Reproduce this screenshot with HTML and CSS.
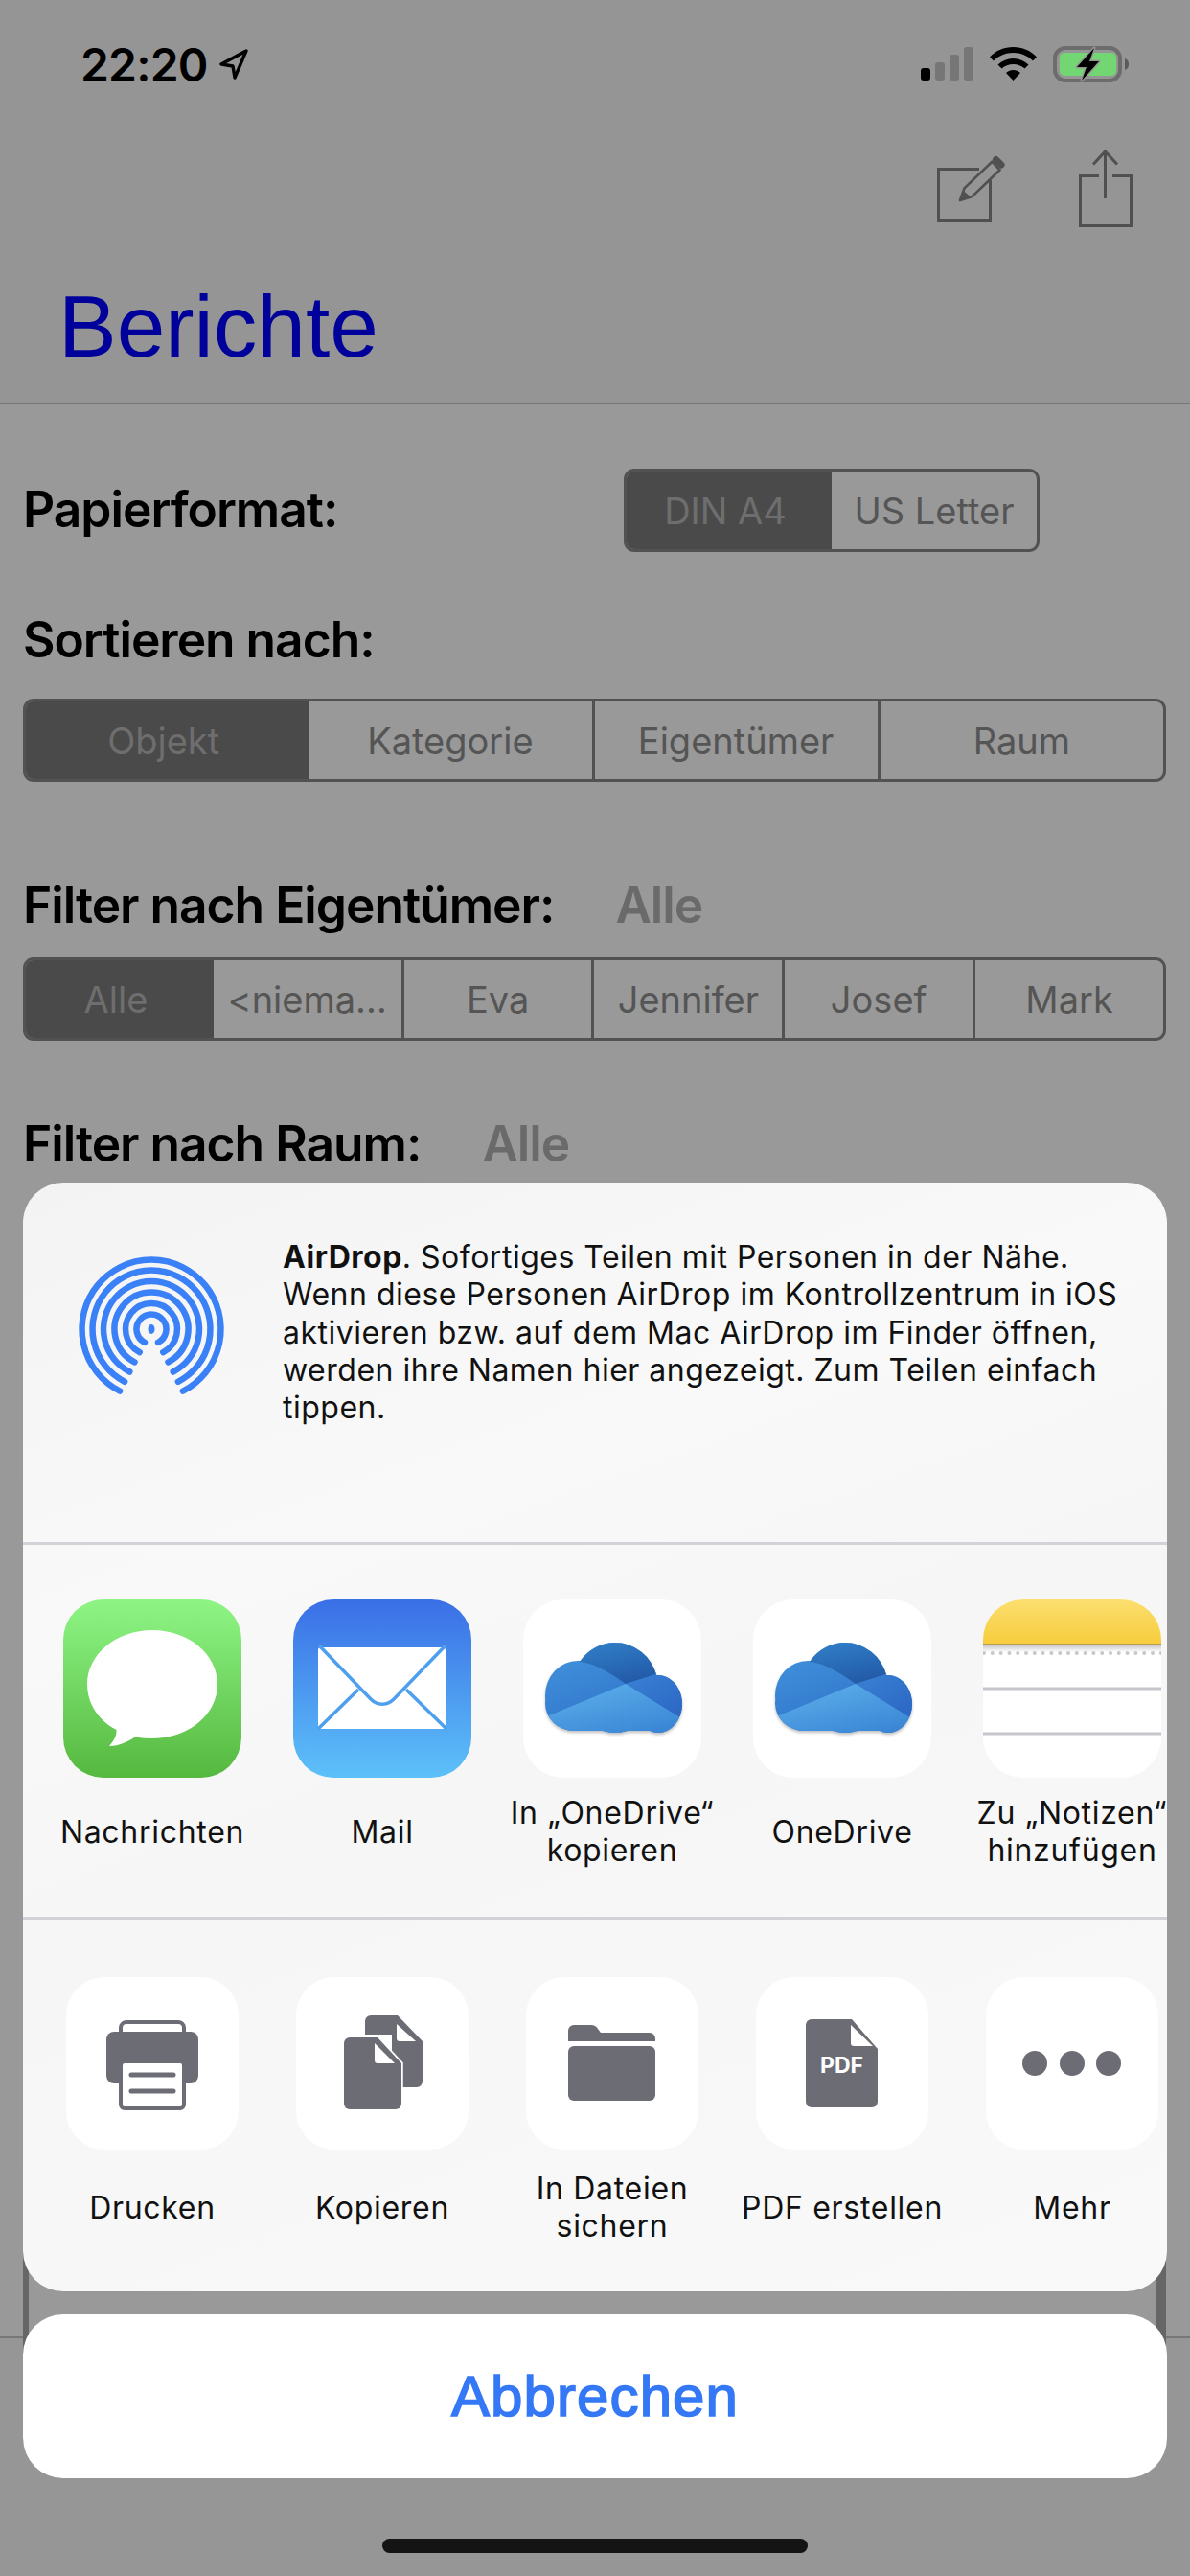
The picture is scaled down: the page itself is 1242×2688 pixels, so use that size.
FILE: index.html
```html
<!DOCTYPE html>
<html lang="de">
<head>
    <meta charset="UTF-8">
    <meta name="viewport" content="width=device-width, initial-scale=1.0">
    <title>Berichte</title>
    <link rel="stylesheet" href="styles.css">
</head>
<body>
    <svg class="defs" width="0" height="0">
        <defs>
            <linearGradient id="od-dark" x1="0.3" y1="0" x2="0.7" y2="1"><stop offset="0" stop-color="#3180c9"/><stop offset="1" stop-color="#2258a6"/></linearGradient>
            <linearGradient id="od-left" x1="0.2" y1="0" x2="0.8" y2="1"><stop offset="0" stop-color="#4295df"/><stop offset="1" stop-color="#2c69c2"/></linearGradient>
            <linearGradient id="od-right" x1="0.2" y1="0" x2="0.8" y2="1"><stop offset="0" stop-color="#3a85d6"/><stop offset="1" stop-color="#2c66c4"/></linearGradient>
            <linearGradient id="od-low" x1="0.2" y1="0" x2="0.8" y2="1"><stop offset="0" stop-color="#5cafea"/><stop offset="1" stop-color="#3782d4"/></linearGradient>
            <clipPath id="od-shape">
                <ellipse cx="57" cy="100" rx="34" ry="36"/>
                <ellipse cx="96" cy="92" rx="45" ry="47"/>
                <ellipse cx="141" cy="109" rx="25" ry="30"/>
                <rect x="23" y="80" width="143" height="57" rx="30"/>
            </clipPath>
            <symbol id="onedrive" viewBox="0 0 186 186">
                <g class="cloud-shape">
                    <g clip-path="url(#od-shape)">
                        <rect x="15" y="40" width="160" height="105" fill="url(#od-left)"/>
                        <path d="M59 40H145V78H139L107 88C95 80 78 67 59 65Z" fill="url(#od-dark)"/>
                        <path d="M139 78L107 88L170 127V60H139Z" fill="url(#od-right)"/>
                        <path d="M20 124L107 88L170 127V145H20Z" fill="url(#od-low)"/>
                    </g>
                </g>
            </symbol>
        </defs>
    </svg>

    <div class="screen">
        <header class="app-header">
            <div class="status-bar">
                <div class="status-left">
                    <span class="time">22:20</span>
                    <svg class="loc" width="32" height="34" viewBox="0 0 32 34"><path d="M29 3L3 17L15 19L17 31Z" fill="none" stroke="#000" stroke-width="3.4" stroke-linejoin="round"/></svg>
                </div>
                <div class="status-right">
                    <svg width="55" height="36" viewBox="0 0 55 36">
                        <rect x="0" y="22" width="10" height="13" rx="3" fill="#000"/>
                        <rect x="15" y="16" width="10" height="19" rx="3" fill="#767676"/>
                        <rect x="30" y="8" width="10" height="27" rx="3" fill="#767676"/>
                        <rect x="45" y="0" width="10" height="35" rx="3" fill="#767676"/>
                    </svg>
                    <svg width="49" height="36" viewBox="0 0 49 36">
                        <path d="M24.5 0C15 0 6.5 3.5 0 10.5L4 14.5C9.5 9 16.5 6 24.5 6S39.500 9 45 14.500L49 10.500C42.500 3.500 34 0 24.500 0Z" fill="#000"/>
                        <path d="M24.500 12C18.500 12 13 14.200 8.500 18.500L12.500 22.500C15.800 19.500 20 18 24.500 18S33.200 19.500 36.500 22.500L40.500 18.500C36 14.200 30.500 12 24.500 12Z" fill="#000"/>
                        <path d="M24.500 24C21.800 24 19.200 25 17 27L24.500 35L32 27C29.800 25 27.200 24 24.500 24Z" fill="#000"/>
                    </svg>
                    <svg width="80" height="38" viewBox="0 0 80 38">
                        <rect x="2" y="2" width="68" height="34" rx="11" fill="none" stroke="#6c6c6c" stroke-width="4"/>
                        <rect x="7" y="7" width="59" height="24" rx="5" fill="#72d672"/>
                        <path d="M75 13C78 14 79 16 79 19S78 24 75 25Z" fill="#5a5a5a"/>
                        <path d="M43 2L25 22H35L30 36L48 16H38Z" fill="#000" stroke="#959595" stroke-width="3" stroke-linejoin="round" paint-order="stroke"/>
                    </svg>
                </div>
            </div>
            <div class="toolbar">
                <svg width="80" height="90" viewBox="0 0 80 90" fill="none" stroke="#505050">
                    <path d="M50 24.500H7.500V78.500H61.500V36" stroke-width="3"/>
                    <path d="M30 57L34.500 44.400L63.400 16.700L71.600 25.300L42.700 53Z" stroke-width="2.600" stroke-linejoin="round"/>
                    <path d="M30 57L33 47L40 53Z" fill="#505050" stroke-width="1"/>
                    <path d="M67.500 14.500L73 20" stroke-width="7" stroke-linecap="round"/>
                </svg>
                <svg width="70" height="90" viewBox="0 0 70 90" fill="none" stroke="#505050" stroke-width="3">
                    <path d="M27 31.500H7.500V83.500H60.500V31.500H41"/>
                    <path d="M33.500 6V55"/>
                    <path d="M21 19.500L33.500 6L46 19.500"/>
                </svg>
            </div>
            <h1 class="title">Berichte</h1>
        </header>

        <main class="form">
            <div class="paper-row">
                <h2 class="form-label paper-label">Papierformat:</h2>
                <div class="segments paper-segments">
                    <span class="segment active">DIN A4</span>
                    <span class="segment">US Letter</span>
                </div>
            </div>

            <h2 class="form-label sort-label">Sortieren nach:</h2>
            <div class="segments">
                <span class="segment active">Objekt</span>
                <span class="segment">Kategorie</span>
                <span class="segment">Eigentümer</span>
                <span class="segment">Raum</span>
            </div>

            <h2 class="form-label owner-label">Filter nach Eigentümer:<span class="filter-value">Alle</span></h2>
            <div class="segments">
                <span class="segment active">Alle</span>
                <span class="segment">&lt;niema…</span>
                <span class="segment">Eva</span>
                <span class="segment">Jennifer</span>
                <span class="segment">Josef</span>
                <span class="segment">Mark</span>
            </div>

            <h2 class="form-label room-label">Filter nach Raum:<span class="filter-value">Alle</span></h2>
        </main>

        <footer class="tabbar">
            <div class="home-bar"></div>
        </footer>

        <div class="preview"></div>

        <div class="share">
            <div class="sheet">
                <section class="airdrop">
                    <svg class="airdrop-icon" width="160" height="160" viewBox="0 0 160 160" fill="none" stroke="#3a80f6" stroke-width="6.500" stroke-linecap="round">
                        <path d="M47.100 144.600A72.500 72.500 0 1 1 112.900 144.600"/>
                        <path d="M52.100 134.800A61.500 61.500 0 1 1 107.900 134.800"/>
                        <path d="M57.300 124.500A50 50 0 1 1 102.700 124.500"/>
                        <path d="M62.500 114.300A38.500 38.500 0 1 1 97.500 114.300"/>
                        <path d="M67.700 104.100A27 27 0 1 1 92.300 104.100"/>
                        <path d="M73 93.800A15.500 15.500 0 1 1 87 93.800"/>
                        <ellipse cx="80" cy="80" rx="3.500" ry="5" fill="#3a80f6" stroke="none"/>
                    </svg>
                    <p class="airdrop-text"><strong>AirDrop</strong>. Sofortiges Teilen mit Personen in der Nähe. Wenn diese Personen AirDrop im Kontrollzentrum in iOS aktivieren bzw. auf dem Mac AirDrop im Finder öffnen, werden ihre Namen hier angezeigt. Zum Teilen einfach tippen.</p>
                </section>

                <section class="share-row apps">
                    <div class="share-item">
                        <svg class="share-icon messages" viewBox="0 0 186 186">
                            <path d="M93 32C130.500 32 161 57 161 88.500S130.500 145 93 145C87 145 81 144.500 75 143.500C68 148 58 153 48 153C52 148 56 143 55.500 136C36 126 25 108 25 88.500C25 57 55.500 32 93 32Z" fill="#fff"/>
                        </svg>
                        <span class="share-name">Nachrichten</span>
                    </div>
                    <div class="share-item">
                        <svg class="share-icon mail" viewBox="0 0 186 186">
                            <rect x="26" y="50" width="133" height="85" rx="3" fill="#fff"/>
                            <g fill="none" stroke="#4f9fef" stroke-width="3.500">
                                <path d="M27 48L81 104C88 111 98 111 105 104L159 48"/>
                                <path d="M26 135L68 94M160 135L118 94"/>
                            </g>
                        </svg>
                        <span class="share-name">Mail</span>
                    </div>
                    <div class="share-item">
                        <svg class="share-icon plain"><use href="#onedrive"/></svg>
                        <span class="share-name">In „OneDrive“<br>kopieren</span>
                    </div>
                    <div class="share-item">
                        <svg class="share-icon plain"><use href="#onedrive"/></svg>
                        <span class="share-name">OneDrive</span>
                    </div>
                    <div class="share-item">
                        <svg class="share-icon plain notes" viewBox="0 0 186 186">
                            <defs>
                                <linearGradient id="notes-top" x1="0" y1="0" x2="0" y2="1"><stop offset="0" stop-color="#fbdf70"/><stop offset="1" stop-color="#f7cc3c"/></linearGradient>
                                <linearGradient id="notes-shade" x1="0" y1="0" x2="0" y2="1"><stop offset="0" stop-color="#c4c4c4"/><stop offset="1" stop-color="#fff"/></linearGradient>
                            </defs>
                            <rect x="0" y="0" width="186" height="47" fill="url(#notes-top)"/>
                            <rect x="0" y="47" width="186" height="8" fill="url(#notes-shade)"/>
                            <rect x="0" y="46" width="186" height="2" fill="#b89d50"/>
                            <path d="M1 56H186" stroke="#c8c8cc" stroke-width="4" stroke-linecap="round" stroke-dasharray="0 8.800"/>
                            <path d="M0 93H186M0 140H186" stroke="#c6c6cc" stroke-width="3"/>
                        </svg>
                        <span class="share-name">Zu „Notizen“<br>hinzufügen</span>
                    </div>
                </section>

                <section class="share-row actions">
                    <div class="share-item">
                        <svg class="share-icon action" viewBox="0 0 180 180">
                            <rect x="57" y="47" width="66" height="30" rx="6" fill="none" stroke="#6c6c74" stroke-width="4"/>
                            <rect x="42" y="57" width="96" height="54" rx="8" fill="#6c6c74"/>
                            <rect x="57" y="88" width="66" height="49" rx="4" fill="#fff" stroke="#6c6c74" stroke-width="4"/>
                            <path d="M68 102H112M68 119H112" stroke="#6c6c74" stroke-width="5" stroke-linecap="round"/>
                        </svg>
                        <span class="share-name">Drucken</span>
                    </div>
                    <div class="share-item">
                        <svg class="share-icon action" viewBox="0 0 180 180">
                            <path d="M78 40H106L132 67V109A6 6 0 0 1 126 115H100V60H72V46A6 6 0 0 1 78 40Z" fill="#6c6c74"/>
                            <path d="M105 49V64A3 3 0 0 0 108 67H125Z" fill="#fff"/>
                            <path d="M56 63H85L110 90V132A6 6 0 0 1 104 138H56A6 6 0 0 1 50 132V69A6 6 0 0 1 56 63Z" fill="#6c6c74" stroke="#fff" stroke-width="3.500" paint-order="stroke"/>
                            <path d="M82 69V87A3 3 0 0 0 85 90H103Z" fill="#fff"/>
                        </svg>
                        <span class="share-name">Kopieren</span>
                    </div>
                    <div class="share-item">
                        <svg class="share-icon action" viewBox="0 0 180 180">
                            <path d="M44 67V56A6 6 0 0 1 50 50H68C71 50 73 51 75 54L78 58H129A6 6 0 0 1 135 64V67Z" fill="#6c6c74"/>
                            <rect x="44" y="72" width="91" height="57" rx="6" fill="#6c6c74"/>
                        </svg>
                        <span class="share-name">In Dateien<br>sichern</span>
                    </div>
                    <div class="share-item">
                        <svg class="share-icon action" viewBox="0 0 180 180">
                            <path d="M58 44H100L127 75V130A6 6 0 0 1 121 136H58A6 6 0 0 1 52 130V50A6 6 0 0 1 58 44Z" fill="#6c6c74"/>
                            <path d="M99 50V69A3 3 0 0 0 102 72H122Z" fill="#fff"/>
                            <text class="pdf-text" x="89.500" y="100" text-anchor="middle">PDF</text>
                        </svg>
                        <span class="share-name">PDF erstellen</span>
                    </div>
                    <div class="share-item">
                        <svg class="share-icon action" viewBox="0 0 180 180" fill="#6c6c74">
                            <circle cx="51" cy="90" r="13"/>
                            <circle cx="90" cy="90" r="13"/>
                            <circle cx="128" cy="90" r="13"/>
                        </svg>
                        <span class="share-name">Mehr</span>
                    </div>
                </section>
            </div>

            <button class="cancel">Abbrechen</button>
        </div>
    </div>
</body>
</html>
```

FILE: styles.css
```css
* {
    margin: 0;
    padding: 0;
    box-sizing: border-box;
}

body {
    font-family: 'Inter', 'Liberation Sans', sans-serif;
    background-color: #999;
    color: #000;
}

.defs {
    position: absolute;
}

.screen {
    position: relative;
    width: 1242px;
    height: 2688px;
    overflow: hidden;
    display: flex;
    flex-direction: column;
    background-color: #999;
}

/* header */
.app-header {
    height: 422px;
    background-color: #959595;
    border-bottom: 2px solid #777;
}

.status-bar {
    height: 134px;
    padding: 0 63px 0 84px;
    display: flex;
    justify-content: space-between;
    align-items: center;
}

.status-left {
    display: flex;
    align-items: center;
    gap: 11px;
}

.time {
    font-size: 48px;
    font-weight: 600;
    letter-spacing: -0.8px;
}

.status-right {
    display: flex;
    align-items: center;
    gap: 17px;
}

.toolbar {
    height: 90px;
    margin-top: 18px;
    padding-right: 52px;
    display: flex;
    justify-content: flex-end;
    gap: 68px;
}

.title {
    margin: 49px 0 0 61px;
    font-family: 'Liberation Sans', sans-serif;
    font-size: 91px;
    font-weight: 400;
    line-height: 100px;
    color: #00009a;
}

/* form behind the sheet */
.form {
    flex: 1;
    padding: 67px 25px 0 24px;
    background-color: #999;
}

.paper-row {
    display: flex;
    align-items: center;
}

.form-label {
    font-size: 51.5px;
    font-weight: 600;
    line-height: 60px;
    letter-spacing: -1px;
    white-space: nowrap;
}

.paper-label {
    flex: 0 0 627px;
    margin-top: -3px;
}

.sort-label {
    margin: 61px 0 32px;
}

.owner-label {
    margin: 98px 0 25px;
}

.room-label {
    margin-top: 77px;
}

.filter-value {
    margin-left: 64px;
    color: #6a6a6a;
}

.segments {
    display: flex;
    height: 87px;
    border: 3px solid #525252;
    border-radius: 11px;
    overflow: hidden;
}

.paper-segments {
    width: 434px;
}

.segment {
    flex: 1 1 0;
    display: flex;
    align-items: center;
    justify-content: center;
    font-size: 38px;
    color: #555;
    white-space: nowrap;
    border-left: 3px solid #525252;
}

.segment.active {
    text-indent: -8px;
    background-color: #4a4a4a;
    color: #6e6e6e;
    border-left: none;
}

.segment.active + .segment {
    border-left: none;
}

.tabbar {
    height: 250px;
    background-color: #969696;
    border-top: 2px solid #777;
    display: flex;
    justify-content: center;
}

.home-bar {
    width: 444px;
    height: 15px;
    margin-top: 209px;
    background-color: #141414;
    border-radius: 8px;
}

.preview {
    position: absolute;
    top: 1240px;
    left: 24px;
    width: 1193px;
    height: 1344px;
    border-left: 6px solid #666;
    border-right: 11px solid #666;
    border-top: 6px solid #333;
    border-radius: 40px;
}

/* share sheet */
.share {
    position: absolute;
    top: 1234px;
    left: 24px;
    width: 1194px;
    display: flex;
    flex-direction: column;
    gap: 24px;
}

.sheet {
    height: 1157px;
    background: linear-gradient(160deg, #f3f3f3 0%, #f9f9f9 30%, #f6f6f6 50%, #f9f9f9 100%);
    border-radius: 42px;
    overflow: hidden;
}

.airdrop {
    height: 375px;
    padding-left: 54px;
    display: flex;
    align-items: flex-start;
}

.airdrop-icon {
    flex: none;
    margin-top: 73px;
}

.airdrop-text {
    width: 885px;
    margin: 58px 0 0 57px;
    font-size: 32px;
    line-height: 39.3px;
    letter-spacing: 0.5px;
    color: #111;
}

.share-row {
    height: 391px;
    padding-left: 15px;
    display: flex;
    border-top: 3px solid #d2d2d8;
}

.apps {
    padding-top: 57px;
}

.actions {
    padding-top: 60px;
}

.share-item {
    flex: 0 0 240px;
    display: flex;
    flex-direction: column;
    align-items: center;
}

.share-icon {
    flex: none;
    width: 186px;
    height: 186px;
    border-radius: 42px;
}

.share-icon.action {
    width: 180px;
    height: 180px;
    border-radius: 40px;
    background-color: #fff;
}

.plain {
    background-color: #fff;
}

.messages {
    background: linear-gradient(#8ef585, #55b83f);
}

.mail {
    background: linear-gradient(#3a6fe6, #5dc1f9);
}

.cloud-shape {
    filter: drop-shadow(0 2px 1.5px rgba(0, 0, 0, 0.25));
}

.pdf-text {
    font-family: 'Inter', sans-serif;
    font-size: 23px;
    font-weight: 700;
    fill: #fff;
}

.share-name {
    min-height: 78px;
    margin-top: 17px;
    display: flex;
    align-items: center;
    text-align: center;
    font-size: 32px;
    line-height: 39px;
    letter-spacing: 0.7px;
    white-space: nowrap;
    color: #111;
}

.actions .share-name {
    margin-top: 21px;
}

.cancel {
    height: 171px;
    border: none;
    border-radius: 42px;
    background-color: #fff;
    color: #3478f6;
    font-family: 'Liberation Sans', sans-serif;
    font-size: 60px;
    font-weight: 400;
    letter-spacing: 1.1px;
    -webkit-text-stroke: 1.6px #3478f6;
}
```
